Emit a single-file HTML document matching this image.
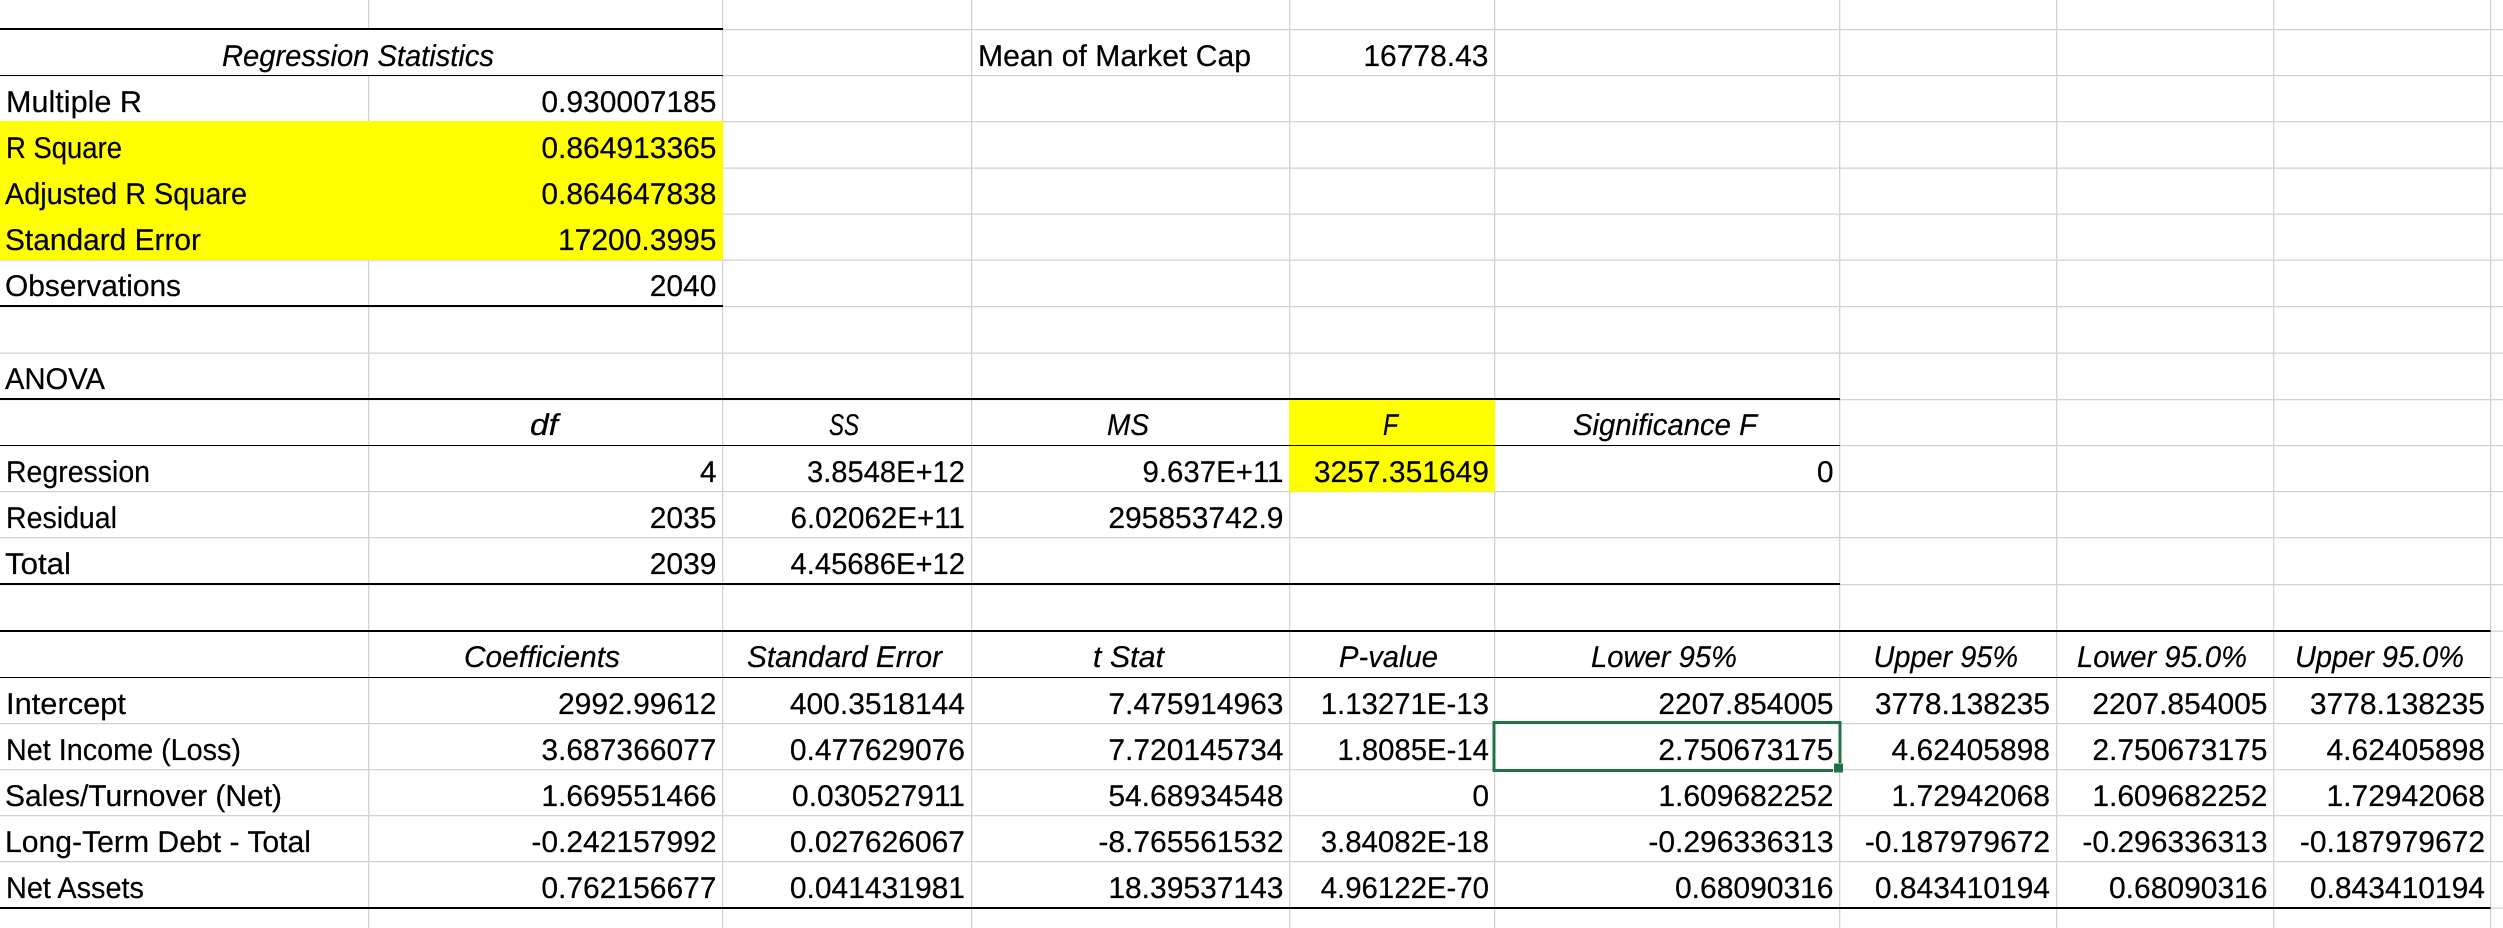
<!DOCTYPE html>
<html lang="en">
<head>
<meta charset="utf-8">
<title>Regression Summary Output</title>
<style>
html,body{margin:0;padding:0;background:#fff;width:2503px;height:928px;overflow:hidden}
svg{display:block}
text{font-family:"Liberation Sans",Arial,sans-serif;font-size:30px;fill:#000;stroke:#000;stroke-width:.2px;text-rendering:geometricPrecision}
.i{font-style:italic}
.r{text-anchor:end}
.g{fill:#d2d2d2}
</style>
</head>
<body>
<svg width="2503" height="928" viewBox="0 0 2503 928" xmlns="http://www.w3.org/2000/svg">
<rect width="2503" height="928" fill="#fff"/>
<!-- gridlines -->
<g class="g">
<rect x="0" y="29" width="2503" height="1.3"/><rect x="0" y="75" width="2503" height="1.3"/><rect x="0" y="121" width="2503" height="1.3"/><rect x="0" y="167.5" width="2503" height="1.3"/><rect x="0" y="213.5" width="2503" height="1.3"/><rect x="0" y="259.5" width="2503" height="1.3"/><rect x="0" y="306" width="2503" height="1.3"/><rect x="0" y="352.5" width="2503" height="1.3"/><rect x="0" y="399" width="2503" height="1.3"/><rect x="0" y="445" width="2503" height="1.3"/><rect x="0" y="491" width="2503" height="1.3"/><rect x="0" y="537" width="2503" height="1.3"/><rect x="0" y="584" width="2503" height="1.3"/><rect x="0" y="630.5" width="2503" height="1.3"/><rect x="0" y="677" width="2503" height="1.3"/><rect x="0" y="723" width="2503" height="1.3"/><rect x="0" y="769" width="2503" height="1.3"/><rect x="0" y="815" width="2503" height="1.3"/><rect x="0" y="861" width="2503" height="1.3"/><rect x="0" y="907.5" width="2503" height="1.3"/>
<rect x="368" y="0" width="1.3" height="928"/><rect x="722" y="0" width="1.3" height="928"/><rect x="971" y="0" width="1.3" height="928"/><rect x="1289" y="0" width="1.3" height="928"/><rect x="1494" y="0" width="1.3" height="928"/><rect x="1839" y="0" width="1.3" height="928"/><rect x="2056" y="0" width="1.3" height="928"/><rect x="2273" y="0" width="1.3" height="928"/><rect x="2490" y="0" width="1.3" height="928"/>
</g>
<!-- merged header cover -->
<rect x="0" y="30" width="722" height="45" fill="#fff"/>
<!-- yellow -->
<rect x="0" y="121" width="723" height="139" fill="#ffff00"/>
<rect x="1289" y="399" width="206" height="92.6" fill="#ffff00"/>
<!-- borders -->
<rect x="0" y="28" width="723" height="2"/>
<rect x="0" y="75" width="723" height="1"/>
<rect x="0" y="305" width="723" height="2"/>
<rect x="0" y="398" width="1840" height="2"/>
<rect x="0" y="445" width="1840" height="1"/>
<rect x="0" y="583" width="1840" height="2"/>
<rect x="0" y="630" width="2490.5" height="2"/>
<rect x="0" y="677" width="2490.5" height="1"/>
<rect x="0" y="907" width="2490.5" height="2"/>
<!-- summary -->
<text class="i" x="222" y="66" textLength="272" lengthAdjust="spacingAndGlyphs">Regression Statistics</text>
<text x="6" y="112" textLength="136" lengthAdjust="spacingAndGlyphs">Multiple R</text>
<text x="6" y="158" textLength="116" lengthAdjust="spacingAndGlyphs">R Square</text>
<text x="5" y="204" textLength="242" lengthAdjust="spacingAndGlyphs">Adjusted R Square</text>
<text x="5" y="250" textLength="196" lengthAdjust="spacingAndGlyphs">Standard Error</text>
<text x="5" y="296" textLength="176" lengthAdjust="spacingAndGlyphs">Observations</text>
<text class="r" x="716.5" y="112">0.930007185</text>
<text class="r" x="716.5" y="158">0.864913365</text>
<text class="r" x="716.5" y="204">0.864647838</text>
<text class="r" x="716.5" y="250">17200.3995</text>
<text class="r" x="716.5" y="296">2040</text>
<text x="978" y="66" textLength="273" lengthAdjust="spacingAndGlyphs">Mean of Market Cap</text>
<text class="r" x="1488.5" y="66">16778.43</text>
<!-- anova -->
<text x="5" y="389" textLength="100" lengthAdjust="spacingAndGlyphs">ANOVA</text>
<text class="i" x="530" y="435" textLength="28" lengthAdjust="spacingAndGlyphs">df</text>
<text class="i" x="829" y="435" textLength="30" lengthAdjust="spacingAndGlyphs">SS</text>
<text class="i" x="1107" y="435" textLength="42" lengthAdjust="spacingAndGlyphs">MS</text>
<text class="i" x="1383" y="435" textLength="15" lengthAdjust="spacingAndGlyphs">F</text>
<text class="i" x="1573" y="435" textLength="184" lengthAdjust="spacingAndGlyphs">Significance F</text>
<text x="6" y="482" textLength="144" lengthAdjust="spacingAndGlyphs">Regression</text>
<text x="6" y="528" textLength="111" lengthAdjust="spacingAndGlyphs">Residual</text>
<text x="5" y="574" textLength="66" lengthAdjust="spacingAndGlyphs">Total</text>
<text class="r" x="716.5" y="482">4</text>
<text class="r" x="716.5" y="528">2035</text>
<text class="r" x="716.5" y="574">2039</text>
<text class="r" x="965" y="482" textLength="158" lengthAdjust="spacingAndGlyphs">3.8548E+12</text>
<text class="r" x="965" y="528" textLength="174.5" lengthAdjust="spacingAndGlyphs">6.02062E+11</text>
<text class="r" x="965" y="574" textLength="174.5" lengthAdjust="spacingAndGlyphs">4.45686E+12</text>
<text class="r" x="1283.5" y="482" textLength="141" lengthAdjust="spacingAndGlyphs">9.637E+11</text>
<text class="r" x="1283.5" y="528">295853742.9</text>
<text class="r" x="1489" y="482">3257.351649</text>
<text class="r" x="1833.5" y="482">0</text>
<!-- coefficients -->
<text class="i" x="464" y="667" textLength="156" lengthAdjust="spacingAndGlyphs">Coefficients</text>
<text class="i" x="747" y="667" textLength="195" lengthAdjust="spacingAndGlyphs">Standard Error</text>
<text class="i" x="1093" y="667" textLength="71" lengthAdjust="spacingAndGlyphs">t Stat</text>
<text class="i" x="1339" y="667" textLength="99" lengthAdjust="spacingAndGlyphs">P-value</text>
<text class="i" x="1591" y="667" textLength="146" lengthAdjust="spacingAndGlyphs">Lower 95%</text>
<text class="i" x="1873.5" y="667" textLength="144.5" lengthAdjust="spacingAndGlyphs">Upper 95%</text>
<text class="i" x="2077" y="667" textLength="170" lengthAdjust="spacingAndGlyphs">Lower 95.0%</text>
<text class="i" x="2295" y="667" textLength="169" lengthAdjust="spacingAndGlyphs">Upper 95.0%</text>

<text x="6" y="714" textLength="120" lengthAdjust="spacingAndGlyphs">Intercept</text>
<text x="6" y="760" textLength="235" lengthAdjust="spacingAndGlyphs">Net Income (Loss)</text>
<text x="5" y="806" textLength="277" lengthAdjust="spacingAndGlyphs">Sales/Turnover (Net)</text>
<text x="5" y="852" textLength="306" lengthAdjust="spacingAndGlyphs">Long-Term Debt - Total</text>
<text x="6" y="898" textLength="138" lengthAdjust="spacingAndGlyphs">Net Assets</text>

<text class="r" x="716.5" y="714">2992.99612</text>
<text class="r" x="716.5" y="760">3.687366077</text>
<text class="r" x="716.5" y="806">1.669551466</text>
<text class="r" x="716.5" y="852">-0.242157992</text>
<text class="r" x="716.5" y="898">0.762156677</text>

<text class="r" x="965" y="714">400.3518144</text>
<text class="r" x="965" y="760">0.477629076</text>
<text class="r" x="965" y="806">0.030527911</text>
<text class="r" x="965" y="852">0.027626067</text>
<text class="r" x="965" y="898">0.041431981</text>

<text class="r" x="1283.5" y="714">7.475914963</text>
<text class="r" x="1283.5" y="760">7.720145734</text>
<text class="r" x="1283.5" y="806">54.68934548</text>
<text class="r" x="1283.5" y="852">-8.765561532</text>
<text class="r" x="1283.5" y="898">18.39537143</text>

<text class="r" x="1489" y="714" textLength="168.3" lengthAdjust="spacingAndGlyphs">1.13271E-13</text>
<text class="r" x="1489" y="760" textLength="151.6" lengthAdjust="spacingAndGlyphs">1.8085E-14</text>
<text class="r" x="1489" y="806">0</text>
<text class="r" x="1489" y="852" textLength="168.3" lengthAdjust="spacingAndGlyphs">3.84082E-18</text>
<text class="r" x="1489" y="898" textLength="168.3" lengthAdjust="spacingAndGlyphs">4.96122E-70</text>

<text class="r" x="1833.5" y="714">2207.854005</text>
<text class="r" x="1833.5" y="760">2.750673175</text>
<text class="r" x="1833.5" y="806">1.609682252</text>
<text class="r" x="1833.5" y="852">-0.296336313</text>
<text class="r" x="1833.5" y="898">0.68090316</text>

<text class="r" x="2050" y="714">3778.138235</text>
<text class="r" x="2050" y="760">4.62405898</text>
<text class="r" x="2050" y="806">1.72942068</text>
<text class="r" x="2050" y="852">-0.187979672</text>
<text class="r" x="2050" y="898">0.843410194</text>

<text class="r" x="2267.5" y="714">2207.854005</text>
<text class="r" x="2267.5" y="760">2.750673175</text>
<text class="r" x="2267.5" y="806">1.609682252</text>
<text class="r" x="2267.5" y="852">-0.296336313</text>
<text class="r" x="2267.5" y="898">0.68090316</text>

<text class="r" x="2485" y="714">3778.138235</text>
<text class="r" x="2485" y="760">4.62405898</text>
<text class="r" x="2485" y="806">1.72942068</text>
<text class="r" x="2485" y="852">-0.187979672</text>
<text class="r" x="2485" y="898">0.843410194</text>
<!-- selection -->
<rect x="1492.5" y="721" width="348.5" height="3" fill="#217346"/>
<rect x="1492.5" y="721" width="3" height="51" fill="#217346"/>
<rect x="1492.5" y="769" width="340.5" height="3" fill="#217346"/>
<rect x="1838.5" y="721" width="3" height="42" fill="#217346"/>
<rect x="1834" y="763.5" width="9" height="9" fill="#217346"/>
</svg>
</body>
</html>
